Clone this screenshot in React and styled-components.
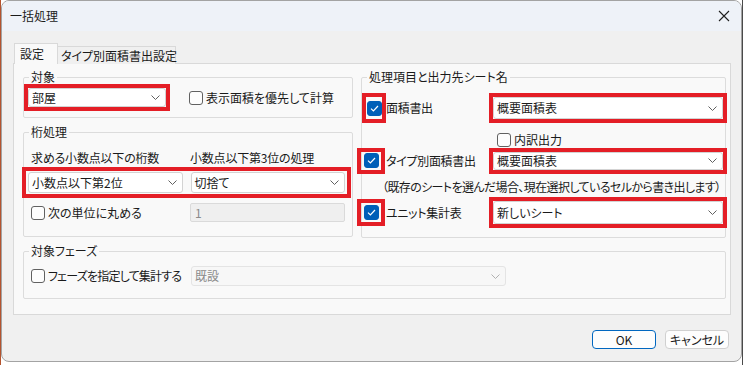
import React from "react";
import styled, { createGlobalStyle } from "styled-components";

const GlobalStyle = createGlobalStyle`
  html, body { margin: 0; padding: 0; }
  body {
    width: 746px;
    height: 365px;
    overflow: hidden;
    background: linear-gradient(to right, #b4532e 0, #b4532e 1px, #ffffff 1px, #ffffff 742px, #4a4a4a 742px, #4a4a4a 743px, #ffffff 743px);
    font-family: "Noto Sans CJK JP", "Noto Sans", sans-serif;
    font-size: 12px;
    color: #1a1a1a;
    font-feature-settings: "palt" 1;
  }
`;

const Dialog = styled.div`
  box-sizing: border-box;
  width: 741px;
  height: 362px;
  margin-left: 1px;
  border: 1px solid #a3a3a3;
  border-radius: 8px;
  overflow: hidden;
  background: #f0f0f0;
  display: flex;
  flex-direction: column;
`;

const TitleBar = styled.div`
  flex: none;
  height: 30px;
  display: flex;
  align-items: center;
  justify-content: space-between;
  padding: 0 11px 0 8px;
  background: #eef2f8;
`;

const Title = styled.span`
  line-height: 14px;
`;

const Body = styled.div`
  display: flex;
  flex-direction: column;
  padding: 12px 10px 0 11px;
`;

const TabStrip = styled.div`
  display: flex;
  align-items: flex-end;
  height: 21px;
  padding-left: 1px;
  margin-bottom: -1px;
  position: relative;
  z-index: 1;
`;

const Tab = styled.div`
  box-sizing: border-box;
  width: ${(p) => p.$w}px;
  height: ${(p) => (p.$active ? 21 : 18)}px;
  padding-left: ${(p) => (p.$active ? 5 : 3)}px;
  border: 1px solid #d9d9d9;
  border-bottom: none;
  margin-left: ${(p) => (p.$active ? 0 : -1)}px;
  background: ${(p) => (p.$active ? "#f9f9f9" : "#f0f0f0")};
  display: flex;
  align-items: center;
  line-height: 14px;
  white-space: nowrap;
`;

const Panel = styled.div`
  box-sizing: border-box;
  height: 252px;
  border: 1px solid #d9d9d9;
  background: #f9f9f9;
  padding: 6px 4px 0 9px;
  display: flex;
  flex-direction: column;
  gap: 6px;
`;

const TopRow = styled.div`
  display: grid;
  grid-template-columns: 330px 365px;
  column-gap: 8px;
  align-items: start;
`;

const Column = styled.div`
  display: flex;
  flex-direction: column;
  gap: 7px;
`;

const Group = styled.fieldset`
  margin: 0;
  min-width: 0;
  border: 1px solid #dcdcdc;
  border-radius: 2px;
  padding: 0 0 ${(p) => p.$pb}px 0;
  display: flex;
  flex-direction: column;
`;

const Legend = styled.legend`
  padding: 0 2px;
  margin-left: 5px;
  line-height: 14px;
`;

const Row = styled.div`
  display: flex;
  align-items: center;
  margin-top: ${(p) => p.$mt || 0}px;
`;

const FieldGrid = styled.div`
  display: grid;
  grid-template-columns: ${(p) => p.$cols};
  align-items: center;
  padding-left: 7px;
  margin-top: ${(p) => p.$mt || 0}px;
`;

const FieldLabel = styled.span`
  line-height: 16px;
  white-space: nowrap;
  letter-spacing: -0.2px;
`;

const RedFrame = styled.div`
  box-sizing: border-box;
  flex: none;
  width: ${(p) => p.$w}px;
  height: ${(p) => p.$h}px;
  margin-left: ${(p) => p.$ml || 0}px;
  padding: ${(p) => p.$pad || "0"};
  border: 4px solid #e41e26;
  display: flex;
  align-items: center;
  justify-content: ${(p) => (p.$center ? "center" : "flex-start")};
  gap: 8px;
`;

const ComboBox = styled.div`
  box-sizing: border-box;
  flex: ${(p) => (p.$w ? "none" : "1")};
  width: ${(p) => (p.$w ? `${p.$w}px` : "auto")};
  min-width: 0;
  height: ${(p) => (p.$h ? `${p.$h}px` : "100%")};
  display: flex;
  align-items: center;
  justify-content: space-between;
  padding: 0 5px 0 3px;
  background: ${(p) => (p.$disabled ? "#f7f7f7" : "#ffffff")};
  border: 1px solid ${(p) => (p.$disabled ? "#e4e4e4" : "#d3d3d3")};
  border-radius: 3px;
  color: ${(p) => (p.$disabled ? "#8a8a8a" : "#1a1a1a")};
  line-height: 14px;
  white-space: nowrap;
`;

const TextBox = styled.div`
  box-sizing: border-box;
  height: 19px;
  display: flex;
  align-items: center;
  padding-left: 4px;
  background: #efefef;
  border: 1px solid #dadada;
  border-radius: 2px;
  color: #8a8a8a;
  line-height: 14px;
`;

const CheckLabel = styled.label`
  display: inline-flex;
  align-items: center;
  gap: 3px;
  line-height: 14px;
  white-space: nowrap;
  letter-spacing: ${(p) => p.$ls || 0}px;
  margin-left: ${(p) => p.$ml || 0}px;
  padding-left: ${(p) => p.$pl || 0}px;
  grid-column: ${(p) => p.$col || "auto"};
`;

const Box = styled.span`
  box-sizing: border-box;
  flex: none;
  width: ${(p) => (p.$checked ? 15 : 14)}px;
  height: ${(p) => (p.$checked ? 15 : 14)}px;
  border-radius: 3px;
  border: 1px solid ${(p) => (p.$checked ? "#005fb8" : "#616161")};
  background: ${(p) => (p.$checked ? "#005fb8" : "#fdfdfd")};
  display: inline-flex;
  align-items: center;
  justify-content: center;
`;

const OutRow = styled.div`
  display: grid;
  grid-template-columns: 24px 103px 238px;
  align-items: center;
  height: ${(p) => p.$h}px;
  margin-top: ${(p) => p.$mt || 0}px;
`;

const OutLabel = styled.span`
  line-height: 14px;
  white-space: nowrap;
  letter-spacing: -0.3px;
`;

const Note = styled.div`
  line-height: 14px;
  padding-left: 20px;
  margin-top: 6px;
  letter-spacing: -0.6px;
  white-space: nowrap;
`;

const Footer = styled.div`
  display: flex;
  justify-content: flex-end;
  gap: 9px;
  margin-top: 15px;
  padding-right: 2px;
`;

const Button = styled.button`
  box-sizing: border-box;
  width: 64px;
  height: 19px;
  padding: 0;
  font: inherit;
  line-height: 14px;
  color: #1a1a1a;
  background: #fdfdfd;
  border: 1px solid ${(p) => (p.$primary ? "#0067c0" : "#d0d0d0")};
  border-radius: 4px;
`;

const Chevron = ({ disabled }) => (
  <svg width="9" height="5" viewBox="0 0 9 5">
    <path d="M0.5 0.5L4.5 4.5L8.5 0.5" fill="none" stroke={disabled ? "#b0b0b0" : "#606060"} strokeWidth="1" />
  </svg>
);

const CloseIcon = () => (
  <svg width="12" height="12" viewBox="0 0 12 12">
    <path d="M1 1L11 11M11 1L1 11" stroke="#1f1f1f" strokeWidth="1.1" />
  </svg>
);

const Combo = ({ children, disabled, h, w }) => (
  <ComboBox $disabled={disabled} $h={h} $w={w}>
    <span>{children}</span>
    <Chevron disabled={disabled} />
  </ComboBox>
);

const Check = ({ checked }) => (
  <Box $checked={checked}>
    {checked && (
      <svg width="9" height="7" viewBox="0 0 9 7">
        <path d="M1 3.6L3.4 6L8 1" fill="none" stroke="#ffffff" strokeWidth="1.2" />
      </svg>
    )}
  </Box>
);

export default function App() {
  return (
    <>
      <GlobalStyle />
      <Dialog>
        <TitleBar>
          <Title>一括処理</Title>
          <CloseIcon />
        </TitleBar>
        <Body>
          <TabStrip>
            <Tab $active $w={44}>設定</Tab>
            <Tab $w={119}>タイプ別面積書出設定</Tab>
          </TabStrip>
          <Panel>
            <TopRow>
              <Column>
                <Group $pb={6}>
                  <Legend>対象</Legend>
                  <Row>
                    <RedFrame $w={146} $h={27}>
                      <Combo>部屋</Combo>
                    </RedFrame>
                    <CheckLabel $ml={19}>
                      <Check />
                      表示面積を優先して計算
                    </CheckLabel>
                  </Row>
                </Group>
                <Group $pb={14}>
                  <Legend>桁処理</Legend>
                  <FieldGrid $cols="159px 1fr" $mt={11}>
                    <FieldLabel>求める小数点以下の桁数</FieldLabel>
                    <FieldLabel>小数点以下第3位の処理</FieldLabel>
                  </FieldGrid>
                  <Row $mt={1}>
                    <RedFrame $w={329} $h={31} $ml={-2} $pad="1px 2px">
                      <Combo h={21}>小数点以下第2位</Combo>
                      <Combo h={21}>切捨て</Combo>
                    </RedFrame>
                  </Row>
                  <FieldGrid $cols="159px 155px" $mt={5}>
                    <CheckLabel>
                      <Check />
                      次の単位に丸める
                    </CheckLabel>
                    <TextBox>1</TextBox>
                  </FieldGrid>
                </Group>
              </Column>
              <Group $pb={9}>
                <Legend>処理項目と出力先シート名</Legend>
                <OutRow $h={30} $mt={9}>
                  <RedFrame $w={24} $h={30} $center>
                    <Check checked />
                  </RedFrame>
                  <OutLabel>面積書出</OutLabel>
                  <RedFrame $w={238} $h={30}>
                    <Combo>概要面積表</Combo>
                  </RedFrame>
                </OutRow>
                <OutRow $h={14} $mt={10}>
                  <CheckLabel $col="3" $pl={8}>
                    <Check />
                    内訳出力
                  </CheckLabel>
                </OutRow>
                <OutRow $h={27}>
                  <RedFrame $w={28} $h={26} $ml={-5} $center>
                    <Check checked />
                  </RedFrame>
                  <OutLabel>タイプ別面積書出</OutLabel>
                  <RedFrame $w={238} $h={26}>
                    <Combo>概要面積表</Combo>
                  </RedFrame>
                </OutRow>
                <Note>（既存のシートを選んだ場合、現在選択しているセルから書き出します）</Note>
                <OutRow $h={31} $mt={3}>
                  <RedFrame $w={28} $h={27} $ml={-5} $center>
                    <Check checked />
                  </RedFrame>
                  <OutLabel>ユニット集計表</OutLabel>
                  <RedFrame $w={238} $h={31}>
                    <Combo>新しいシート</Combo>
                  </RedFrame>
                </OutRow>
              </Group>
            </TopRow>
            <Group $pb={12}>
              <Legend>対象フェーズ</Legend>
              <FieldGrid $cols="160px 315px" $mt={8}>
                <CheckLabel $ls={-0.8}>
                  <Check />
                  フェーズを指定して集計する
                </CheckLabel>
                <Combo disabled h={20}>既設</Combo>
              </FieldGrid>
            </Group>
          </Panel>
          <Footer>
            <Button $primary>OK</Button>
            <Button>キャンセル</Button>
          </Footer>
        </Body>
      </Dialog>
    </>
  );
}
